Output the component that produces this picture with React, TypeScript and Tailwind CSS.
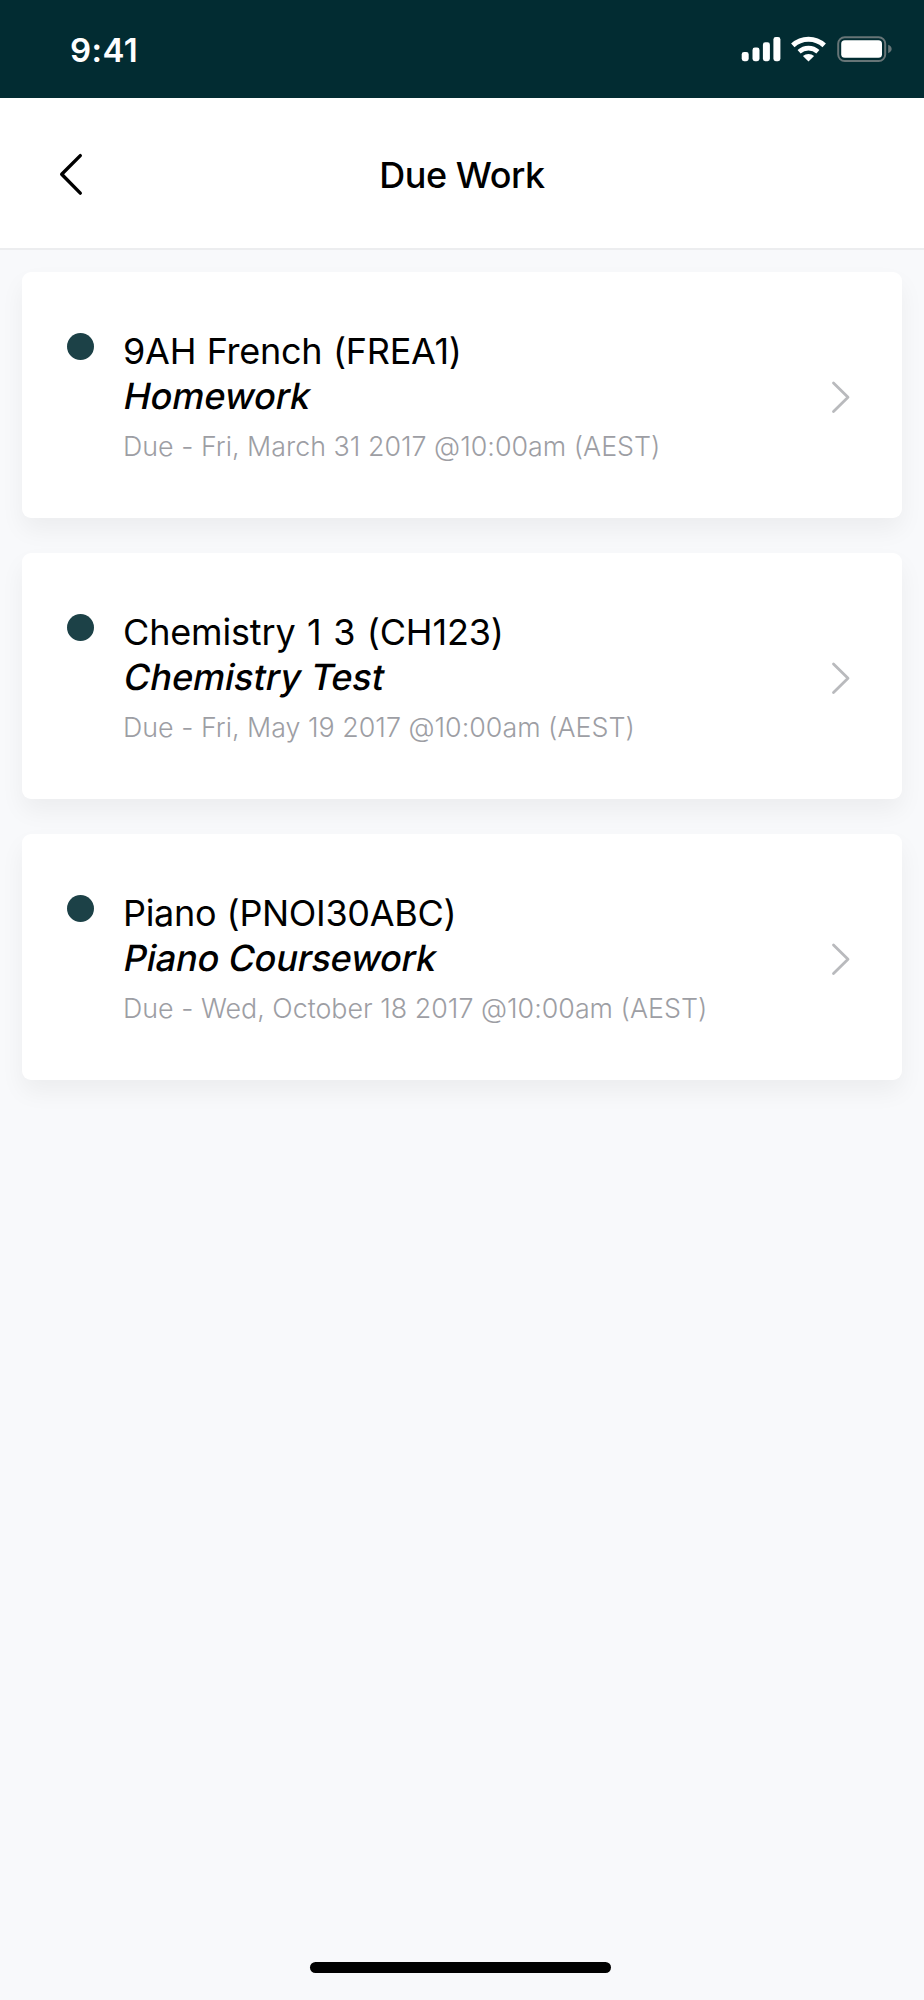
type Work = { course: string; task: string; due: string; courseSpacing: string; taskSpacing: string };

const works: Work[] = [
  {
    course: "9AH French (FREA1)",
    task: "Homework",
    due: "Due - Fri, March 31 2017 @10:00am (AEST)",
    courseSpacing: "tracking-[-0.25px] [word-spacing:0.6px]",
    taskSpacing: "tracking-[-0.05px]",
  },
  {
    course: "Chemistry 1 3 (CH123)",
    task: "Chemistry Test",
    due: "Due - Fri, May 19 2017 @10:00am (AEST)",
    courseSpacing: "tracking-[-0.16px] [word-spacing:1.6px]",
    taskSpacing: "tracking-[0px]",
  },
  {
    course: "Piano (PNOI30ABC)",
    task: "Piano Coursework",
    due: "Due - Wed, October 18 2017 @10:00am (AEST)",
    courseSpacing: "tracking-[-0.32px] [word-spacing:0.6px]",
    taskSpacing: "tracking-[-0.18px]",
  },
];

function SignalIcon() {
  return (
    <svg width="40" height="26" viewBox="0 0 40 26" fill="#fff">
      <rect x="0.7" y="16" width="7" height="9.2" rx="2.4" />
      <rect x="11.5" y="11.6" width="7" height="13.6" rx="2.4" />
      <rect x="21.9" y="6.3" width="7" height="18.9" rx="2.4" />
      <rect x="32.4" y="1" width="7" height="24.2" rx="2.4" />
    </svg>
  );
}

function WifiIcon() {
  return (
    <svg width="36" height="26" viewBox="0 0 36 26" fill="none" stroke="#fff">
      <path d="M1.8 9.4A23 23 0 0 1 33.2 9.4" strokeWidth="5" />
      <path d="M8.1 15.8A14 14 0 0 1 26.9 15.8" strokeWidth="4.6" />
      <path d="M11.9 20.1A8.2 8.2 0 0 1 23.1 20.1L17.5 25.6Z" fill="#fff" stroke="none" />
    </svg>
  );
}

function BatteryIcon() {
  return (
    <svg width="56" height="26" viewBox="0 0 56 26">
      <rect x="1.2" y="1.2" width="47" height="23.8" rx="6.5" fill="none" stroke="#677577" strokeWidth="2" />
      <rect x="4.2" y="4.3" width="40.8" height="17.5" rx="3.6" fill="#fff" />
      <path d="M51.2 8.8C55.8 10.6 55.8 15.4 51.2 17.2Z" fill="#677577" />
    </svg>
  );
}

function WorkCard({ course, task, due, courseSpacing, taskSpacing }: Work) {
  return (
    <li className="flex h-[246px] items-start rounded-[9px] bg-white pl-[45px] pr-[51px] shadow-[0_12px_24px_rgba(0,0,0,0.052)]">
      <span className="mt-[60.5px] size-[27px] shrink-0 rounded-full bg-[#1c4147]" />
      <div className="ml-[29px] mt-[57px] flex-1 whitespace-nowrap text-black">
        <h2 className={`text-[36px] font-normal leading-[45px] ${courseSpacing}`}>{course}</h2>
        <p className={`-ml-px origin-[0_79%] -skew-x-[11deg] text-[36px] font-medium leading-[45px] ${taskSpacing}`}>{task}</p>
        <p className="mt-[9px] text-[26.8px] font-light leading-[36px] tracking-[0.02px] text-[#9d9ea4]">{due}</p>
      </div>
      <svg className="mt-[108px] shrink-0" width="20" height="34" viewBox="0 0 20 34" fill="none" stroke="#b9babd" strokeWidth="2.8" strokeLinecap="round" strokeLinejoin="round">
        <path d="M2.5 3L17 17.3L2.5 31.6" />
      </svg>
    </li>
  );
}

export default function App() {
  return (
    <div className="flex h-[2000px] w-[924px] flex-col bg-[#f8f9fb] font-['Inter',sans-serif]">
      <div className="flex h-[98px] items-center justify-between bg-[#022c32] pl-[70px] pr-[31px] text-white">
        <span className="pt-[2px] text-[33px] font-semibold leading-none tracking-[0.4px]">9:41</span>
        <div className="flex items-center gap-[10px]">
          <SignalIcon />
          <WifiIcon />
          <BatteryIcon />
        </div>
      </div>
      <header className="grid h-[152px] grid-cols-[1fr_auto_1fr] items-center border-b-2 border-[#ecedef] bg-white px-[58px] pt-[3px]">
        <button aria-label="Back" className="w-[28px]">
          <svg width="28" height="44" viewBox="0 0 28 44" fill="none" stroke="#000" strokeWidth="3.4" strokeLinecap="round" strokeLinejoin="round">
            <path d="M22.3 2.6L3.7 21.2L22.3 40.1" />
          </svg>
        </button>
        <h1 className="pt-[2px] text-[36px] font-medium leading-[45px] tracking-[-0.45px] text-black">Due Work</h1>
      </header>
      <ul className="flex flex-1 flex-col gap-[35.2px] px-[22px] pt-[22px]">
        {works.map((work) => (
          <WorkCard key={work.course} {...work} />
        ))}
      </ul>
      <div className="mb-[27px] mr-[3px] h-[11px] w-[301px] self-center rounded-full bg-black" />
    </div>
  );
}
